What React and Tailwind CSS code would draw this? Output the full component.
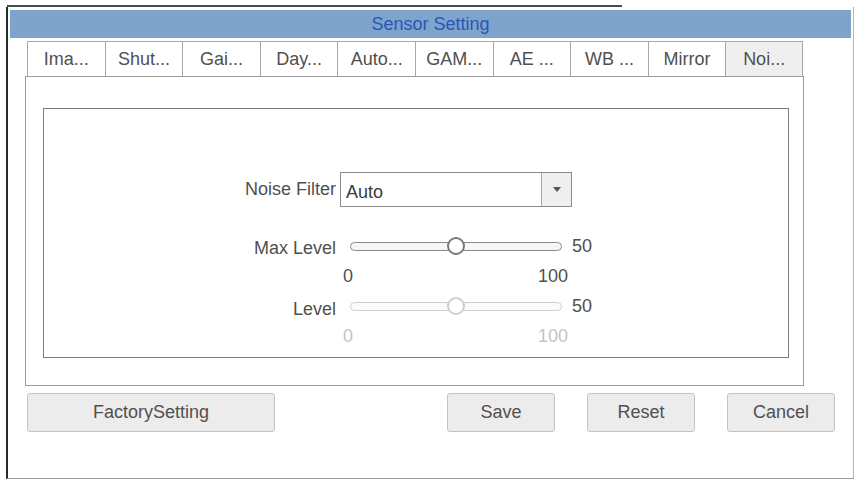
import React from "react";

const tabs = ["Ima...", "Shut...", "Gai...", "Day...", "Auto...", "GAM...", "AE ...", "WB ...", "Mirror", "Noi..."];

function Slider({ disabled }) {
  const track = disabled ? "border-[#cfcfcf] bg-[#fafafa]" : "border-[#8a8a8a] bg-[#f6f6f6]";
  const thumb = disabled ? "border-[#cfcfcf]" : "border-[#7a7a7a]";
  return (
    <div className="relative w-[212px] h-[18px] flex items-center">
      <div className={`w-full h-[9px] rounded-full border ${track}`} />
      <div className={`absolute left-[97px] top-0 w-[18px] h-[18px] rounded-full bg-white border-2 ${thumb}`} />
    </div>
  );
}

export default function App() {
  return (
    <div
      className="w-[856px] h-[481px] bg-white overflow-hidden text-[#505050]"
      style={{ fontFamily: '"Liberation Sans", Arial, sans-serif' }}
    >
      <div className="pt-[5px] pl-[7px]">
        <div className="h-[2px] w-[615px] bg-[#4a4a4a]" />
      </div>
      <div className="ml-[6px] w-[848px] h-[472px] border-l-2 border-l-[#2a2a2a] border-r border-r-[#b5b5b5] border-b border-b-[#9a9a9a] pt-[3px] px-[2px]">
        <div className="h-[28px] bg-[#7ea4cc] flex items-center justify-center text-[18px] text-[#2c55b6]">
          Sensor Setting
        </div>
        <div className="mt-[3px] ml-[17px] h-[35px] flex">
          {tabs.map((t, i) => (
            <div
              key={t}
              className={`w-[77.6px] h-full flex items-center justify-center text-[18px] border-t border-l border-[#a8a8a8] ${
                i === tabs.length - 1 ? "border-r bg-[#efefef]" : "bg-white"
              }`}
            >
              {t}
            </div>
          ))}
        </div>
        <div className="ml-[15px] w-[779px] h-[310px] border border-[#9c9c9c] pt-[31px] pl-[17px]">
          <div className="w-[746px] h-[250px] border border-[#7c7c7c] pt-[63px]">
            <div className="flex h-[35px]">
              <div className="w-[292px] text-right text-[18px] pt-[4px]">Noise Filter</div>
              <div className="ml-[4px] w-[232px] h-[35px] border border-[#8c8c8c] flex">
                <div className="flex-1 pl-[5px] pt-[6px] text-[18px] text-[#3a3a3a]">Auto</div>
                <div className="w-[30px] h-full border-l border-[#a8a8a8] bg-[#efefef] flex items-center justify-center">
                  <div className="w-0 h-0 border-l-[4px] border-r-[4px] border-t-[5px] border-l-transparent border-r-transparent border-t-[#555]" />
                </div>
              </div>
            </div>
            <div className="flex h-[30px] items-center mt-[24px]">
              <div className="w-[292px] text-right text-[18px] pt-[5px]">Max Level</div>
              <div className="ml-[14px]">
                <Slider />
              </div>
              <div className="ml-[10px] text-[18px]">50</div>
            </div>
            <div className="flex h-[30px] items-center">
              <div className="w-[292px]" />
              <div className="ml-[7px] w-[225px] flex justify-between text-[18px]">
                <span>0</span>
                <span>100</span>
              </div>
            </div>
            <div className="flex h-[30px] items-center">
              <div className="w-[292px] text-right text-[18px] pt-[6px]">Level</div>
              <div className="ml-[14px]">
                <Slider disabled />
              </div>
              <div className="ml-[10px] text-[18px]">50</div>
            </div>
            <div className="flex h-[30px] items-center">
              <div className="w-[292px]" />
              <div className="ml-[7px] w-[225px] flex justify-between text-[18px] text-[#c4c4c4]">
                <span>0</span>
                <span>100</span>
              </div>
            </div>
          </div>
        </div>
        <div className="mt-[7px] ml-[17px] flex h-[39px] text-[18px]">
          <div className="w-[248px] h-full rounded-[3px] border border-[#c4c4c4] bg-[#ececec] flex items-center justify-center">
            FactorySetting
          </div>
          <div className="ml-[172px] w-[108px] h-full rounded-[3px] border border-[#c4c4c4] bg-[#ececec] flex items-center justify-center">
            Save
          </div>
          <div className="ml-[32px] w-[108px] h-full rounded-[3px] border border-[#c4c4c4] bg-[#ececec] flex items-center justify-center">
            Reset
          </div>
          <div className="ml-[32px] w-[108px] h-full rounded-[3px] border border-[#c4c4c4] bg-[#ececec] flex items-center justify-center">
            Cancel
          </div>
        </div>
      </div>
    </div>
  );
}
